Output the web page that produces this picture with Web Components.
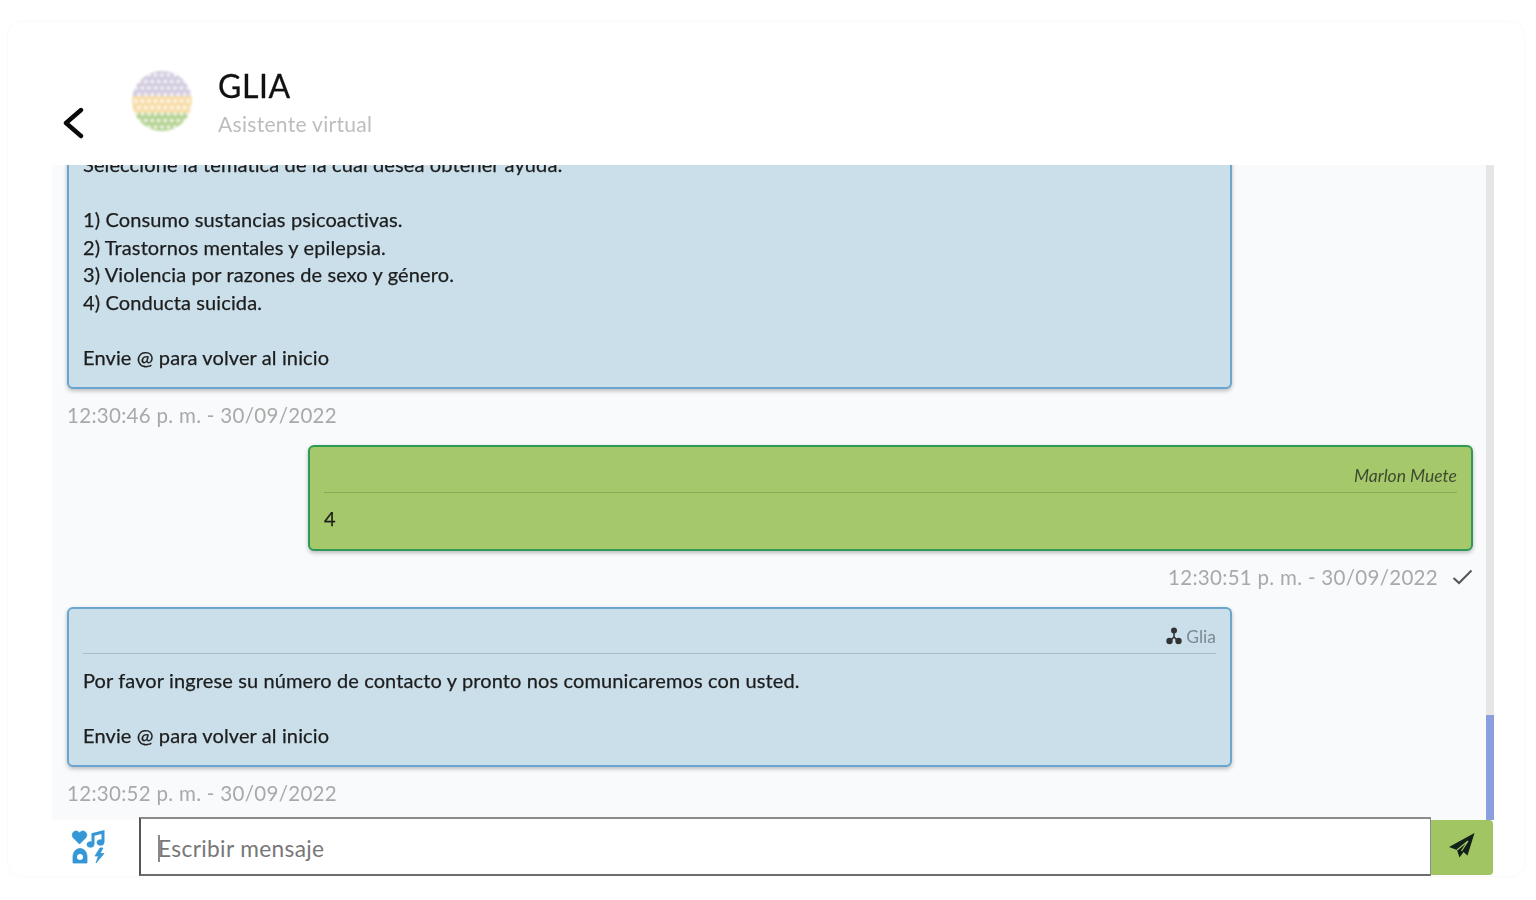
<!DOCTYPE html>
<html lang="es"><head><meta charset="utf-8"><title>GLIA</title>
<style>
html,body{margin:0;height:100%;background:#fff;overflow:hidden}
body{font-family:Lato,"Liberation Sans",sans-serif;color:#1c1c1c}
</style></head><body>
<chat-app>
  <chat-header slot="header" name="GLIA" role="Asistente virtual"></chat-header>
  <chat-message side="in" time="12:30:46 p. m. - 30/09/2022">Seleccione la temática de la cual desea obtener ayuda:

1) Consumo sustancias psicoactivas.
2) Trastornos mentales y epilepsia.
3) Violencia por razones de sexo y género.
4) Conducta suicida.

Envie @ para volver al inicio</chat-message>
  <chat-message side="out" sender="Marlon Muete" time="12:30:51 p. m. - 30/09/2022">4</chat-message>
  <chat-message side="in" sender="Glia" bot time="12:30:52 p. m. - 30/09/2022">Por favor ingrese su número de contacto y pronto nos comunicaremos con usted.

Envie @ para volver al inicio</chat-message>
  <chat-input slot="footer" placeholder="Escribir mensaje"></chat-input>
</chat-app>
<script>
function el(name, css, html){
  customElements.define(name, class extends HTMLElement{
    connectedCallback(){
      if(this.shadowRoot) return;
      const r=this.attachShadow({mode:'open'});
      r.innerHTML='<style>'+css+'</style>'+(typeof html==='function'?html(this):html);
    }
  });
}
el('chat-app',`
:host{display:block;box-sizing:border-box;height:900px;padding:22px 12px 24px 8px}
.card{height:100%;box-sizing:border-box;display:flex;flex-direction:column;border-radius:14px;
 box-shadow:0 0 3px rgba(0,0,0,.05);filter:blur(.6px)}
.mid{height:655px;display:flex;margin:0 30px 0 44px;background:#f9fafc}
.list{flex:1;min-width:0;overflow:hidden;display:flex;flex-direction:column;justify-content:flex-end;padding:0 13px 0 15px;box-sizing:border-box}
::slotted(chat-message:last-of-type){margin-bottom:-3px}
.track{width:8px;background:#e6e6e6;display:flex;flex-direction:column;justify-content:flex-end}
.thumb{height:105px;background:#8b9fe0}
`,`<div class="card"><slot name="header"></slot>
<div class="mid"><div class="list"><slot></slot></div><div class="track"><div class="thumb"></div></div></div>
<slot name="footer"></slot></div>`);

el('chat-header',`
:host{display:flex;height:143px;box-sizing:border-box;padding:48px 0 0 54px}
.back{width:22px;height:32px;margin-top:37px;flex:none}
.logo{width:62px;height:62px;margin-left:47px;flex:none;filter:blur(1px);opacity:.85}
.txt{margin-left:25px}
.n{font-size:32px;line-height:32px;color:#111;letter-spacing:.6px;-webkit-text-stroke:.3px #111}
.r{font-size:21px;line-height:28px;margin-top:8px;color:#bdbdbd;letter-spacing:.3px}
`,h=>{
  let d='';
  for(let y=0;y<9;y++)for(let x=0;x<9;x++){
    const cx=5+x*6.5+(y%2?3.2:0), cy=5+y*6.5;
    d+=`<circle cx="${cx}" cy="${cy}" r="2.100" fill="#fff" opacity=".7"/>`;
  }
  return `<svg class="back" viewBox="0 0 22 32"><path d="M19 3 4 16l15 13" fill="none" stroke="#0a0a0a" stroke-width="4.4" stroke-linecap="round" stroke-linejoin="round"/></svg>
<svg class="logo" viewBox="0 0 62 62"><defs><clipPath id="c"><circle cx="31" cy="31" r="30"/></clipPath></defs>
<g clip-path="url(#c)"><rect width="62" height="26" fill="#cbc3da"/><rect y="26" width="62" height="17" fill="#f6d79a"/><rect y="43" width="62" height="19" fill="#aacb80"/>${d}</g></svg>
<div class="txt"><div class="n">${h.getAttribute('name')}</div><div class="r">${h.getAttribute('role')}</div></div>`;
});

el('chat-message',`
:host{display:flex;flex-direction:column}
:host([side=out]){align-items:flex-end}
.b{width:1165px;box-sizing:border-box;border:2px solid #69a5cf;background:#cadfea;border-radius:6px;padding:14px 14px 16px;
 box-shadow:0 2px 4px rgba(0,0,0,.25);color:#1d1d1d}
:host([side=out]) .b{background:#a5c96a;border-color:#2f9a55;padding-bottom:16px}
.s{height:31px;box-sizing:border-box;padding-top:3px;border-bottom:1px solid rgba(0,0,0,.16);font-size:17.5px;line-height:22px;color:#7c8a92;margin-bottom:13px;display:flex;justify-content:flex-end;align-items:flex-start;gap:3px}
:host([side=out]) .s{font-style:italic;color:#3e4a30;height:32px;margin-bottom:12px;padding-top:4px}
.s svg{width:18px;height:20px;flex:none}
.t{white-space:pre-line;font-size:20px;line-height:27.5px;letter-spacing:.12px;-webkit-text-stroke:.25px #1d1d1d}
.m{display:flex;align-items:center;gap:14px;height:56px;box-sizing:border-box;padding-bottom:4px;font-size:20.5px;color:#a9a9a9;letter-spacing:.3px}
`,h=>{
  const s=h.getAttribute('sender');
  const bot=h.hasAttribute('bot')?`<svg viewBox="0 0 18 20"><circle cx="9" cy="4.5" r="3" fill="#333"/><path d="M9 6v5M9 11l-4 4M9 11l4 4" stroke="#333" stroke-width="1.6"/><circle cx="4.5" cy="15" r="3.2" fill="#333"/><circle cx="13.500" cy="15" r="3.2" fill="#333"/></svg>`:'';
  const chk=h.getAttribute('side')==='out'?`<svg width="21" height="16" viewBox="0 0 21 16"><path d="M1.500 9l5.500 5L19.500 1.500" fill="none" stroke="#555" stroke-width="2"/></svg>`:'';
  return `<div class="b">${s?`<div class="s">${bot}<span>${s}</span></div>`:''}<div class="t"><slot></slot></div></div>
<div class="m"><span>${h.getAttribute('time')}</span>${chk}</div>`;
});

el('chat-input',`
:host{display:flex;align-items:stretch;height:59px;margin:-3px 31px 0 52px;box-sizing:border-box;position:relative}
.ic{width:79px;flex:none;display:flex;align-items:center;padding-left:12px;box-sizing:border-box}
.ic svg{width:33px;height:34px}
.f{flex:1;min-width:0;background:#fff;border:2px solid #8b8b8b;border-bottom-color:#6d6d6d;border-left-color:#555;border-right-width:1px;box-sizing:border-box;display:flex;align-items:center;padding:3px 0 0 17px;font-size:22.7px;color:#777;letter-spacing:.35px}
.f i{width:2px;height:27px;background:#888;margin-right:-2px;flex:none}
.send{width:62px;flex:none;margin:3px 0 1px;background:#a1c562;border-radius:0 4px 4px 0;display:flex;align-items:center;justify-content:center}
.send svg{width:26px;height:26px;margin-top:-4px}
`,h=>`<div class="ic"><svg viewBox="0 0 33 34" fill="#3597d6" stroke="#3597d6" stroke-width=".8">
<path d="M7.500 14 1 7.500C-1 4.500 1 1 4.200 1 5.700 1 7 2 7.500 3 8 2 9.300 1 10.800 1 14 1 16 4.500 14 7.500Z"/>
<path d="M21 14V4.500L31 2v10" fill="none" stroke-width="3"/><ellipse cx="18.500" cy="14.500" rx="3.500" ry="2.800"/><ellipse cx="28.500" cy="12.500" rx="3.500" ry="2.800"/>
<path d="M1 33V27C1 22 4 18.500 8 18.500S15 22 15 27V33Z"/><circle cx="8" cy="27" r="3" fill="#fff" stroke="none"/>
<path d="M28 18 23 26h3.500L24 33l8-9.500h-4l3-5.500Z"/></svg></div>
<div class="f"><i></i><span>${h.getAttribute('placeholder')}</span></div>
<div class="send"><svg viewBox="0 0 26 26"><path d="M25.500 0 0 14l8 3 2.500 7.500 4-5.500 4 3.500Z" fill="#12201a"/><path d="M8 17 19 8l-6.500 10" fill="none" stroke="#a1c562" stroke-width="1.200"/></svg></div>`);
</script>
</body></html>
